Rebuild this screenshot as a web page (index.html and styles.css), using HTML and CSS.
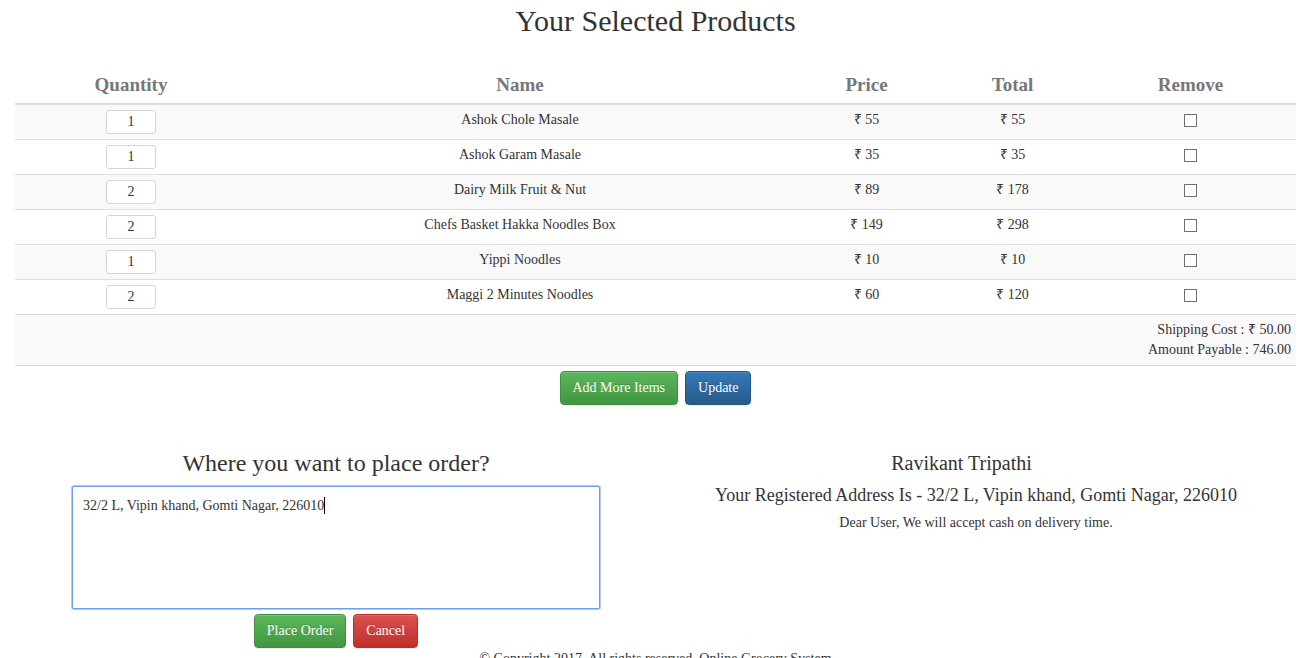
FILE: index.html
```html
<!DOCTYPE html>
<html>
<head>
<meta charset="utf-8">
<title>Your Selected Products</title>
<link rel="stylesheet" href="styles.css">
</head>
<body>
<div class="page">
  <h2 class="title">Your Selected Products</h2>
  <table class="cart">
    <colgroup>
      <col class="c-qty"><col class="c-name"><col class="c-price"><col class="c-total"><col class="c-remove">
    </colgroup>
    <thead>
      <tr><th>Quantity</th><th>Name</th><th>Price</th><th>Total</th><th>Remove</th></tr>
    </thead>
    <tbody>
      <tr><td><span class="qty">1</span></td><td>Ashok Chole Masale</td><td>₹ 55</td><td>₹ 55</td><td><span class="chk"></span></td></tr>
      <tr><td><span class="qty">1</span></td><td>Ashok Garam Masale</td><td>₹ 35</td><td>₹ 35</td><td><span class="chk"></span></td></tr>
      <tr><td><span class="qty">2</span></td><td>Dairy Milk Fruit &amp; Nut</td><td>₹ 89</td><td>₹ 178</td><td><span class="chk"></span></td></tr>
      <tr><td><span class="qty">2</span></td><td>Chefs Basket Hakka Noodles Box</td><td>₹ 149</td><td>₹ 298</td><td><span class="chk"></span></td></tr>
      <tr><td><span class="qty">1</span></td><td>Yippi Noodles</td><td>₹ 10</td><td>₹ 10</td><td><span class="chk"></span></td></tr>
      <tr><td><span class="qty">2</span></td><td>Maggi 2 Minutes Noodles</td><td>₹ 60</td><td>₹ 120</td><td><span class="chk"></span></td></tr>
      <tr class="summary"><td colspan="5">Shipping Cost : ₹ 50.00<br>Amount Payable : 746.00</td></tr>
    </tbody>
  </table>
  <div class="actions">
    <button class="btn btn-success">Add More Items</button>
    <button class="btn btn-primary">Update</button>
  </div>
  <div class="lower">
    <div class="col">
      <h3 class="col-title">Where you want to place order?</h3>
      <div class="address-box" role="textbox">32/2 L, Vipin khand, Gomti Nagar, 226010<span class="caret"></span></div>
      <div class="actions tight">
        <button class="btn btn-success">Place Order</button>
        <button class="btn btn-danger">Cancel</button>
      </div>
    </div>
    <div class="col">
      <h3 class="col-title name">Ravikant Tripathi</h3>
      <p class="reg">Your Registered Address Is - 32/2 L, Vipin khand, Gomti Nagar, 226010</p>
      <p class="note">Dear User, We will accept cash on delivery time.</p>
    </div>
  </div>
  <footer class="footer">© Copyright 2017, All rights reserved, Online Grocery System</footer>
</div>
</body>
</html>
```
FILE: styles.css
```css
html, body {
  margin: 0;
  padding: 0;
  background: #fff;
}
body {
  font-family: "Liberation Serif", "Times New Roman", serif;
  font-size: 14px;
  line-height: 20px;
  color: #333;
}
.page {
  padding: 0 15px;
}
.title {
  margin: 4px 0 29px;
  font-size: 30px;
  font-weight: normal;
  line-height: 33px;
  text-align: center;
  color: #333;
}
.cart {
  width: 100%;
  border-collapse: collapse;
  border-spacing: 0;
  table-layout: fixed;
}
.c-qty { width: 232px; }
.c-name { width: 546px; }
.c-price { width: 147px; }
.c-total { width: 145px; }
.c-remove { width: 211px; }
.cart th {
  padding: 5px;
  font-size: 19px;
  line-height: 27px;
  font-weight: bold;
  color: #777;
  text-align: center;
  border-bottom: 2px solid #ddd;
}
.cart td {
  padding: 5px;
  height: 24px;
  text-align: center;
  vertical-align: top;
  border-top: 1px solid #ddd;
}
.cart tbody tr:nth-child(odd) td {
  background: #f9f9f9;
}
.cart .summary td {
  text-align: right;
  height: auto;
  padding: 5px;
  border-bottom: 1px solid #ddd;
}
.qty {
  display: inline-block;
  box-sizing: border-box;
  width: 50px;
  height: 24px;
  line-height: 22px;
  border: 1px solid #d6d6d6;
  border-radius: 3px;
  background: #fff;
  text-align: center;
}
.chk {
  display: inline-block;
  box-sizing: border-box;
  width: 13px;
  height: 13px;
  margin-top: 4px;
  border: 1px solid #6e6e6e;
  background: #fff;
}
.actions {
  display: flex;
  justify-content: center;
  gap: 7px;
  margin-top: 5px;
}
.actions.tight {
  margin-top: 5px;
}
.btn {
  font-family: "Liberation Serif", "Times New Roman", serif;
  font-size: 14px;
  line-height: 20px;
  padding: 6px 12px;
  border-radius: 4px;
  border: 1px solid transparent;
  color: #fff;
  text-shadow: 0 -1px 0 rgba(0,0,0,.2);
  box-shadow: inset 0 1px 0 rgba(255,255,255,.15), 0 1px 1px rgba(0,0,0,.075);
}
.btn-success {
  background: linear-gradient(to bottom, #5cb85c 0, #419641 100%);
  border-color: #3e8f3e;
}
.btn-primary {
  background: linear-gradient(to bottom, #337ab7 0, #265a88 100%);
  border-color: #245580;
}
.btn-danger {
  background: linear-gradient(to bottom, #d9534f 0, #c12e2a 100%);
  border-color: #b92c28;
}
.lower {
  display: grid;
  grid-template-columns: 640px 640px;
  margin: 45px 0 0 1px;
}
.col {
  display: flex;
  flex-direction: column;
  align-items: center;
}
.col-title {
  margin: 0;
  font-size: 24px;
  font-weight: normal;
  line-height: 26px;
  color: #333;
}
.col-title.name {
  font-size: 20px;
  padding-right: 29px;
}
.address-box {
  box-sizing: border-box;
  width: 528px;
  height: 123px;
  margin-top: 10px;
  padding: 9px 10px;
  border: 1px solid #6d9ee8;
  box-shadow: 0 0 0 1px #b3cbf1;
  border-radius: 2px;
  text-align: left;
  align-self: center;
  background: #fff;
}
.caret {
  display: inline-block;
  width: 1px;
  height: 17px;
  background: #000;
  vertical-align: -4px;
}
.reg {
  margin: 7px 0 0;
  font-size: 18px;
  line-height: 24px;
}
.note {
  margin: 6px 0 0;
  font-size: 14px;
  line-height: 20px;
}
.footer {
  margin-top: 1px;
  text-align: center;
  font-size: 14px;
  line-height: 20px;
}
```
